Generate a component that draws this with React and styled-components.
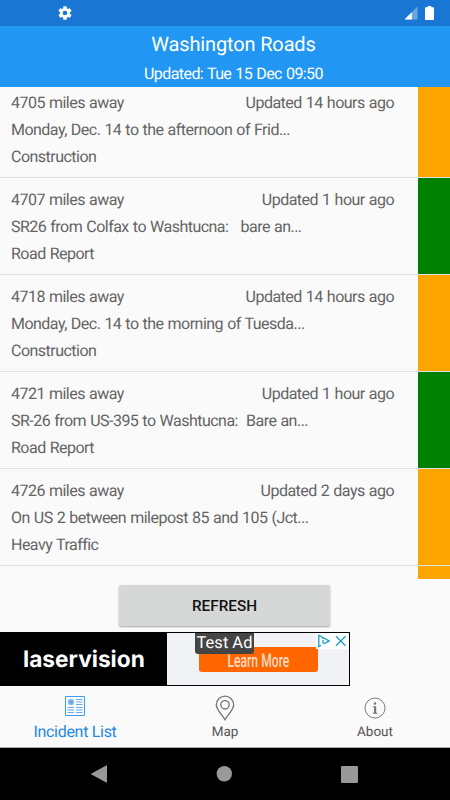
import styled, { createGlobalStyle } from "styled-components";

const incidents = [
  { id: 1, miles: 4705, updated: "14 hours ago", text: "Monday, Dec. 14 to the afternoon of Frid...", type: "Construction", color: "orange" },
  { id: 2, miles: 4707, updated: "1 hour ago", text: "SR26 from Colfax to Washtucna:   bare an...", type: "Road Report", color: "green" },
  { id: 3, miles: 4718, updated: "14 hours ago", text: "Monday, Dec. 14 to the morning of Tuesda...", type: "Construction", color: "orange" },
  { id: 4, miles: 4721, updated: "1 hour ago", text: "SR-26 from US-395 to Washtucna:  Bare an...", type: "Road Report", color: "green" },
  { id: 5, miles: 4726, updated: "2 days ago", text: "On US 2 between milepost 85 and 105 (Jct...", type: "Heavy Traffic", color: "orange" },
];

const ListIcon = () => (
  <svg width="20" height="20" viewBox="0 0 20 20" fill="none" stroke="#3d9fec">
    <path d="M.5.5h19v19H.5z" />
    <circle cx="6" cy="6" r="2.9" fill="#7fbdf0" stroke="#7fbdf0" strokeWidth=".6" />
    <path d="M4.3 5.5h3.4M4.5 7h3" stroke="#3d8fd8" strokeWidth=".6" />
    <path
      d="M11 3.5h6.5M11 6h6.5M11 8.5h6.5M2.5 11.5H9M11 11.5h6.5M2.5 14H9M11 14h6.5M2.5 16.5H9M11 16.5h6.5"
      stroke="#64aff0"
    />
  </svg>
);

const MapIcon = () => (
  <svg width="20" height="26" viewBox="0 0 20 26" fill="none" stroke="#777" strokeWidth="1.35">
    <path d="M10 24.700C7.600 20.300 1.300 14.900 1.300 9.800a8.700 8.700 0 0 1 17.400 0c0 5.100-6.300 10.500-8.700 14.900z" />
    <circle cx="10" cy="9.800" r="4.200" />
  </svg>
);

const AboutIcon = () => (
  <svg width="22" height="22" viewBox="0 0 22 22">
    <circle cx="11" cy="11" r="10" fill="none" stroke="#7c7c7c" />
    <circle cx="11" cy="6.5" r="1.3" fill="#777" />
    <path d="M8.9 9.2h3.3v6.5h1.1v1H8.8v-1H10v-5.5H8.9z" fill="#777" />
  </svg>
);

function App() {
  return (
    <>
      <GlobalStyle />
      <Screen>
        <StatusBar>
          <svg width="16" height="16" viewBox="0 0 24 24" fill="#fff">
            <path d="M19.43 12.98c.04-.32.07-.64.07-.98s-.03-.66-.07-.98l2.11-1.65c.19-.15.24-.42.12-.64l-2-3.46c-.12-.22-.39-.3-.61-.22l-2.49 1c-.52-.4-1.08-.73-1.69-.98l-.38-2.65A.49.49 0 0 0 14 2h-4c-.25 0-.46.18-.49.42l-.38 2.65c-.61.25-1.17.59-1.69.98l-2.49-1c-.23-.09-.49 0-.61.22l-2 3.46c-.13.22-.07.49.12.64l2.11 1.65c-.04.32-.07.65-.07.98s.03.66.07.98l-2.11 1.65c-.19.15-.24.42-.12.64l2 3.46c.12.22.39.3.61.22l2.49-1c.52.4 1.08.73 1.69.98l.38 2.65c.03.24.24.42.49.42h4c.25 0 .46-.18.49-.42l.38-2.65c.61-.25 1.17-.59 1.69-.98l2.49 1c.23.09.49 0 .61-.22l2-3.46c.12-.22.07-.49-.12-.64l-2.11-1.65zM12 15.5A3.5 3.5 0 1 1 12 8.500a3.5 3.5 0 0 1 0 7z" />
          </svg>
          <StatusIcons>
            <svg width="14" height="14" viewBox="0 0 14 14">
              <path d="M13.500.5v13H.5z" fill="#6ca6df" />
              <path d="M7.800 6.200v7.300H.5z" fill="#fff" />
            </svg>
            <svg width="9" height="14" viewBox="0 0 9 14" fill="#fff">
              <path d="M2.700 0h3.600v1.300h1.900q.8 0 .8.800v11.100q0 .8-.8.800H.8q-.8 0-.8-.8V2.100q0-.8.8-.8h1.900z" />
            </svg>
          </StatusIcons>
        </StatusBar>

        <Header>
          <Title>Washington Roads</Title>
          <Subtitle>Updated: Tue 15 Dec 09:50</Subtitle>
        </Header>

        <List>
          {incidents.map((item) => (
            <Row key={item.id}>
              <RowBody>
                <RowTop>
                  <span>{item.miles} miles away</span>
                  <span>Updated {item.updated}</span>
                </RowTop>
                <RowText>{item.text}</RowText>
                <RowText>{item.type}</RowText>
              </RowBody>
              <Severity $color={item.color} />
            </Row>
          ))}
          <Row>
            <RowBody />
            <Severity $color="orange" />
          </Row>
        </List>

        <Actions>
          <RefreshButton>REFRESH</RefreshButton>
        </Actions>

        <Ad>
          <AdBrand>
            <BrandName>laservision</BrandName>
          </AdBrand>
          <AdBody>
            <LearnMore>
              <LearnText>Learn More</LearnText>
            </LearnMore>
          </AdBody>
          <TestLabel>Test Ad</TestLabel>
          <AdChoices>
            <svg width="16" height="16" viewBox="0 0 16 16" fill="none" stroke="#179fc2" strokeWidth="1.300">
              <path d="M5 12.200 2.800 13.500V2.300L13.200 7.900 7.500 11" />
              <path d="M7 7v3.500M7 4.800v1.200" />
            </svg>
            <svg width="16" height="16" viewBox="0 0 16 16" fill="none" stroke="#179fc2" strokeWidth="1.300">
              <path d="m3 3.300 9.500 9.500m0-9.500L3 12.800" />
            </svg>
          </AdChoices>
        </Ad>

        <TabBar>
          <Tab $active>
            <TabIcon $top={2}>
              <ListIcon />
            </TabIcon>
            Incident List
          </Tab>
          <Tab>
            <TabIcon $top={7}>
              <MapIcon />
            </TabIcon>
            Map
          </Tab>
          <Tab>
            <TabIcon $top={7}>
              <AboutIcon />
            </TabIcon>
            About
          </Tab>
        </TabBar>

        <NavBar>
          <svg width="16" height="18" viewBox="0 0 16 18" fill="#999">
            <path d="M16 .8v16.400q0 .8-.8.4L.5 9.500q-.8-.5 0-1L15.200.4q.8-.4.8.4z" />
          </svg>
          <svg width="16" height="16" viewBox="0 0 16 16" fill="#999">
            <circle cx="8.300" cy="7.700" r="7.700" />
          </svg>
          <svg width="17" height="17" viewBox="0 0 17 17" fill="#999">
            <rect width="17" height="17" rx="1.200" />
          </svg>
        </NavBar>
      </Screen>
    </>
  );
}

export default App;

const GlobalStyle = createGlobalStyle`
  * {
    box-sizing: border-box;
  }
  body {
    margin: 0;
    font-family: Roboto, sans-serif;
    text-rendering: geometricPrecision;
  }
  svg {
    display: block;
  }
`;

const Screen = styled.div`
  display: flex;
  flex-direction: column;
  width: 450px;
  height: 800px;
  background-color: #fafafa;
  overflow: hidden;
`;

const StatusBar = styled.div`
  display: flex;
  align-items: center;
  justify-content: space-between;
  height: 26px;
  padding: 0 16px 0 57px;
  background-color: #1976d2;
`;

const StatusIcons = styled.div`
  display: flex;
  gap: 7px;
`;

const Header = styled.div`
  height: 61px;
  padding-top: 5px;
  background-color: #2196f3;
  color: white;
  text-align: center;
`;

const Title = styled.div`
  font-size: 20px;
  line-height: 26px;
  letter-spacing: -0.15px;
  padding-left: 17px;
`;

const Subtitle = styled.div`
  font-size: 16px;
  line-height: 22px;
  letter-spacing: -0.58px;
  word-spacing: 0.7px;
  margin-top: 6px;
  padding-left: 17px;
`;

const List = styled.div`
  height: 492px;
  overflow: hidden;

  & > :first-child {
    margin-top: -6px;
  }
`;

const Row = styled.div`
  display: flex;
  height: 97px;
  border-bottom: 1px solid #e2e2e2;
`;

const RowBody = styled.div`
  flex: 1;
  padding: 8px 24px 0 11px;
  font-size: 16px;
  line-height: 27px;
  letter-spacing: -0.52px;
  word-spacing: 0.6px;
  color: #646464;
`;

const RowTop = styled.div`
  display: flex;
  justify-content: space-between;
`;

const RowText = styled.div`
  white-space: pre;
`;

const Severity = styled.div`
  width: 32px;
  background-color: ${(props) => props.$color};
`;

const Actions = styled.div`
  display: flex;
  justify-content: center;
  height: 53px;
  padding: 6px 1px 0 0;
`;

const RefreshButton = styled.button`
  width: 211px;
  height: 41px;
  border: none;
  border-radius: 2px;
  background-color: #d6d7d7;
  box-shadow: 0 1px 2px rgba(0, 0, 0, 0.35);
  color: #111;
  font-family: Roboto, sans-serif;
  font-size: 15.300px;
  font-weight: 500;
`;

const Ad = styled.div`
  position: relative;
  display: flex;
  width: 350px;
  height: 54px;
  border: 1px solid black;
  background-color: #f1f2f5;
`;

const AdBrand = styled.div`
  display: flex;
  align-items: center;
  width: 166px;
  padding-left: 22px;
  background-color: black;
`;

const BrandName = styled.span`
  color: white;
  font-family: Inter, sans-serif;
  font-size: 22.700px;
  font-weight: 700;
`;

const AdBody = styled.div`
  flex: 1;
  padding: 14px 0 0 32px;
`;

const LearnMore = styled.div`
  display: flex;
  align-items: center;
  justify-content: center;
  width: 119px;
  height: 25px;
  border-radius: 3px;
  background-color: #ff6600;
`;

const LearnText = styled.span`
  color: #ffd9c2;
  font-size: 19px;
  font-weight: 500;
  line-height: 20px;
  white-space: nowrap;
  transform: translateY(1px) scaleX(0.64);
`;

const TestLabel = styled.div`
  position: absolute;
  top: 0;
  left: 194px;
  width: 59px;
  height: 21px;
  border-radius: 0 0 3px 3px;
  background-color: #444;
  color: white;
  font-size: 16.500px;
  line-height: 21px;
  text-align: center;
  white-space: nowrap;
`;

const AdChoices = styled.div`
  position: absolute;
  top: 0;
  right: 0;
  display: flex;
  gap: 1px;
  background-color: white;
`;

const TabBar = styled.div`
  display: flex;
  height: 62px;
  border-bottom: 1px solid #aaa;
`;

const Tab = styled.div`
  display: flex;
  flex: 1;
  flex-direction: column;
  align-items: center;
  color: ${(props) => (props.$active ? "#1e88e5" : "#555")};
  font-size: ${(props) => (props.$active ? "16px" : "13.500px")};
  letter-spacing: ${(props) => (props.$active ? "-0.3px" : "0")};
  line-height: 18px;
`;

const TabIcon = styled.div`
  display: flex;
  align-items: center;
  height: 37px;
  padding-top: ${(props) => props.$top}px;
`;

const NavBar = styled.div`
  display: flex;
  align-items: center;
  justify-content: space-between;
  height: 52px;
  padding: 0 92px 0 91px;
  background-color: black;
`;
